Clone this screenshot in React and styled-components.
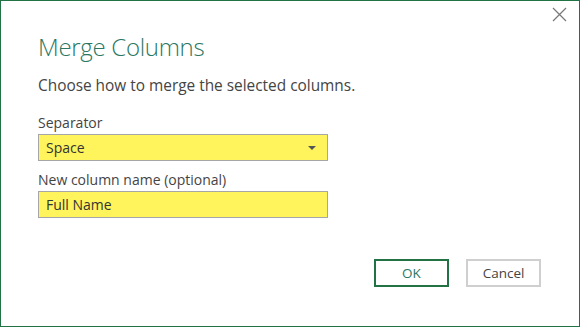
import React from "react";
import styled, { createGlobalStyle } from "styled-components";

const Global = createGlobalStyle`
  html, body { margin: 0; padding: 0; background: #fff; }
  * { box-sizing: border-box; }
`;

const Dialog = styled.div`
  width: 580px;
  height: 327px;
  border: 1px solid #217346;
  background: #fff;
  display: flex;
  flex-direction: column;
  font-family: "Open Sans", "Liberation Sans", sans-serif;
  color: #444;
`;

const TitleBar = styled.div`
  display: flex;
  justify-content: flex-end;
  padding: 6px 12px 0 0;
  height: 30px;
`;

const CloseButton = styled.button`
  width: 15px;
  height: 15px;
  padding: 0;
  border: none;
  background: transparent;
  display: flex;
  align-items: center;
  justify-content: center;
  cursor: pointer;
`;

const Body = styled.div`
  display: flex;
  flex-direction: column;
  padding: 0 0 0 37px;
  flex: 1;
`;

const Title = styled.h1`
  margin: 0;
  font-weight: 300;
  font-size: 24px;
  line-height: 32px;
  color: #2a7863;
  letter-spacing: -0.3px;
`;

const Subtitle = styled.p`
  margin: 13px 0 0 0;
  font-size: 15.4px;
  line-height: 20px;
  color: #444;
`;

const Label = styled.label`
  display: block;
  font-size: 14px;
  line-height: 20px;
  color: #444;
  margin-top: ${(p) => p.$top}px;
`;

const Field = styled.div`
  width: 290px;
  height: 27px;
  margin-top: 1px;
  background: #fff45c;
  border: 1px solid #a6a6a6;
  display: flex;
  align-items: center;
  justify-content: space-between;
  padding: 0 8px 0 7px;
  font-size: 14px;
  color: #333;
`;

const Caret = styled.span`
  width: 0;
  height: 0;
  border-left: 4px solid transparent;
  border-right: 4px solid transparent;
  border-top: 4px solid #555;
  margin-right: 3px;
`;

const Footer = styled.div`
  display: flex;
  justify-content: flex-end;
  gap: 17px;
  padding: 0 38px 39px 0;
  margin-top: auto;
`;

const Button = styled.button`
  width: 75px;
  height: 28px;
  background: #fff;
  border: 2px solid ${(p) => (p.$primary ? "#217346" : "#cfcfcf")};
  font-family: "Open Sans", "Liberation Sans", sans-serif;
  font-size: 13.5px;
  color: ${(p) => (p.$primary ? "#2a7863" : "#444")};
  padding: 0;
  cursor: pointer;
`;

export default function App() {
  return (
    <>
      <Global />
      <Dialog>
        <TitleBar>
          <CloseButton aria-label="Close">
            <svg width="15" height="15" viewBox="0 0 15 15">
              <path d="M1 1 L14 14 M14 1 L1 14" stroke="#777" strokeWidth="1.2" fill="none" />
            </svg>
          </CloseButton>
        </TitleBar>
        <Body>
          <Title>Merge Columns</Title>
          <Subtitle>Choose how to merge the selected columns.</Subtitle>
          <Label $top={17}>Separator</Label>
          <Field>
            <span>Space</span>
            <Caret />
          </Field>
          <Label $top={9}>New column name (optional)</Label>
          <Field>
            <span>Full Name</span>
          </Field>
        </Body>
        <Footer>
          <Button $primary>OK</Button>
          <Button>Cancel</Button>
        </Footer>
      </Dialog>
    </>
  );
}
